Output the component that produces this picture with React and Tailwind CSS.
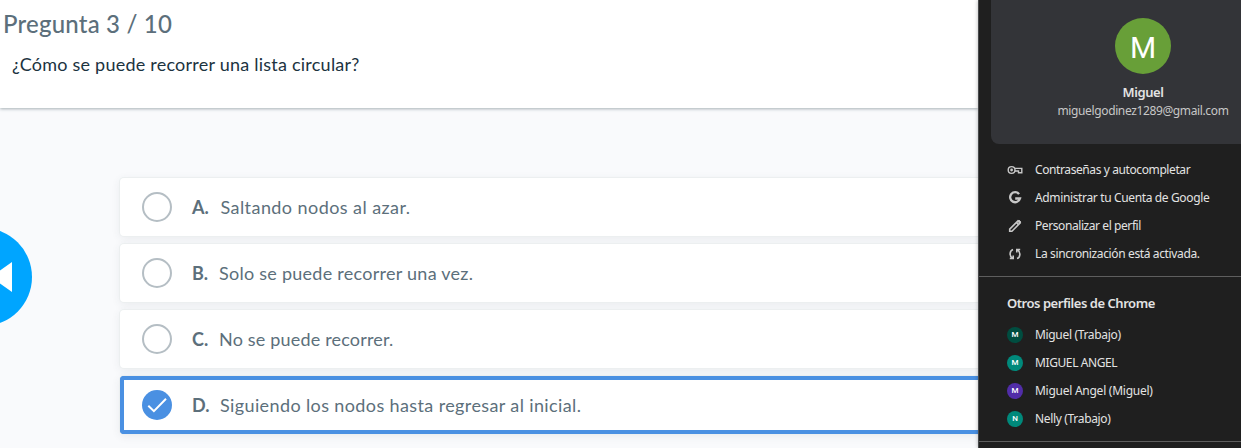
import React from "react";

const answers = [
  { id: "A.", text: "Saltando nodos al azar.", idCls: "w-[28.5px]", cls: "tracking-[0.43px]" },
  { id: "B.", text: "Solo se puede recorrer una vez.", idCls: "w-[27px]", cls: "tracking-[0.26px]" },
  { id: "C.", text: "No se puede recorrer.", idCls: "w-[27px]", cls: "tracking-[0.18px]" },
  { id: "D.", text: "Siguiendo los nodos hasta regresar al inicial.", idCls: "w-[28px]", cls: "tracking-[0.38px]", selected: true },
];

const KeyIcon = () => (
  <svg viewBox="0 0 16 16" className="size-4" fill="none" stroke="#c7c7c7" strokeWidth="1.4">
    <circle cx="4.6" cy="8" r="3.4" />
    <circle cx="4.6" cy="8" r="1.4" fill="#c7c7c7" stroke="none" />
    <path d="M7.8 6.4h7v4.4h-3.3V9H7.8" />
  </svg>
);
const GoogleIcon = () => (
  <svg viewBox="0 0 16 16" className="size-4" fill="none" stroke="#c7c7c7" strokeWidth="2.3">
    <path d="M12.1 4.1A5 5 0 1 0 13 8.5H8.2" />
  </svg>
);
const PencilIcon = () => (
  <svg viewBox="0 0 16 16" className="size-4" fill="none" stroke="#c7c7c7" strokeWidth="1.6">
    <path d="M2.7 13.3v-2.2L10.9 2.9l2.2 2.2-8.2 8.2z" />
    <path d="M9.4 4.4l2.2 2.2" />
    <path d="M11 2.9l1-.9 2 2-.9 1z" fill="#c7c7c7" strokeWidth=".8" />
  </svg>
);
const SyncIcon = () => (
  <svg viewBox="0 0 16 16" className="size-4" fill="none" stroke="#c7c7c7" strokeWidth="1.6">
    <path d="M6 3.4C2.4 4.8 2.2 9.8 5.3 12.2M6.2 9.4v3.1H2.8" />
    <path d="M10 12.6c3.6-1.4 3.8-6.4.7-8.8M9.8 6.6V3.5h3.4" />
  </svg>
);

const actions = [
  { Icon: KeyIcon, text: "Contraseñas y autocompletar", cls: "tracking-[-0.4px]" },
  { Icon: GoogleIcon, text: "Administrar tu Cuenta de Google", cls: "tracking-[-0.36px]" },
  { Icon: PencilIcon, text: "Personalizar el perfil", cls: "tracking-[-0.42px]" },
  { Icon: SyncIcon, text: "La sincronización está activada.", cls: "tracking-[-0.37px]" },
];
const profiles = [
  { letter: "M", bg: "bg-[#004d40]", text: "Miguel (Trabajo)", cls: "tracking-[-0.33px]" },
  { letter: "M", bg: "bg-[#00897b]", text: "MIGUEL ANGEL", cls: "tracking-[-0.4px]" },
  { letter: "M", bg: "bg-[#512da8]", text: "Miguel Angel (Miguel)", cls: "tracking-[-0.26px]" },
  { letter: "N", bg: "bg-[#00897b]", text: "Nelly (Trabajo)", cls: "tracking-[-0.33px]" },
];

function Answer({ a }) {
  return (
    <div
      className={
        "flex h-[58px] items-center rounded-l-[4px] bg-white shadow-[0_0_0_1px_#eceff0,0_2px_10px_rgba(50,70,80,0.09)] " +
        (a.selected ? "border-4 border-r-0 border-[#4a90e2] pl-[18px]" : "pl-[22px]")
      }
    >
      {a.selected ? (
        <svg viewBox="0 0 30 30" className="size-[30px] shrink-0">
          <circle cx="15" cy="15" r="15" fill="#4a90e2" />
          <path d="M6.3 15.7l5.6 5.5L24 8.7" fill="none" stroke="#fff" strokeWidth="2" />
        </svg>
      ) : (
        <span className="size-[30px] shrink-0 rounded-full border-2 border-[#b5bec4]" />
      )}
      <span className={"ml-5 shrink-0 text-[18px] font-bold " + a.idCls}>{a.id}</span>
      <span className={"whitespace-nowrap text-[18px] " + a.cls}>{a.text}</span>
    </div>
  );
}

export default function App() {
  return (
    <div className="flex h-[448px] w-[1241px] overflow-hidden bg-[#f9fafc]">
      <main className="flex w-[978px] shrink-0 flex-col overflow-hidden font-['Lato',sans-serif] text-[#5c6f7b]">
        <header className="h-[108px] shrink-0 bg-white shadow-[0_1px_3px_rgba(40,65,75,0.4)]">
          <h1 className="ml-[3px] mt-[6px] whitespace-nowrap text-[24px] font-medium leading-9 tracking-[0.2px]">
            Pregunta 3 / 10
          </h1>
          <p className="ml-3 mt-[10px] whitespace-nowrap text-[18px] leading-6 tracking-[0.23px] text-[#1c333f]">
            ¿Cómo se puede recorrer una lista circular?
          </p>
        </header>
        <div className="flex pt-[70px]">
          <div className="w-[120px] shrink-0 pt-[50px]">
            <svg viewBox="0 0 32 98" className="h-[98px] w-8">
              <circle cx="-17" cy="49" r="49" fill="#00a5ff" />
              <path d="M-9 49L12 34v30z" fill="#fff" />
            </svg>
          </div>
          <div className="flex grow flex-col gap-2">
            {answers.map((a) => (
              <Answer key={a.id} a={a} />
            ))}
          </div>
        </div>
      </main>
      <aside className="relative w-[263px] shrink-0 overflow-hidden border-l border-[#47494b] bg-[#1f1f1f] font-['Noto_Sans',sans-serif] text-[12px] text-[#e3e3e3] shadow-[0_0_4px_rgba(0,0,0,0.3)]">
        <section className="ml-3 flex h-36 w-[304px] flex-col items-center rounded-b-lg bg-[#333438] pt-[18px]">
          <div className="flex size-14 items-center justify-center rounded-full bg-[#689f38] pt-0.5 font-['Roboto',sans-serif] text-[30px] text-white">
            M
          </div>
          <div className="mt-[9px] text-[13px] font-semibold leading-[18px] tracking-[-0.45px]">Miguel</div>
          <div className="mt-px leading-[18px] tracking-[-0.37px] text-[#c7c7c7]">miguelgodinez1289@gmail.com</div>
        </section>
        <ul className="mt-3 flex flex-col">
          {actions.map(({ Icon, text, cls }) => (
            <li key={text} className="flex h-7 items-center pl-7">
              <Icon />
              <span className={"ml-3 whitespace-nowrap " + cls}>{text}</span>
            </li>
          ))}
        </ul>
        <div className="mt-2 h-px bg-[#5e5e5e]" />
        <h2 className="mt-[17px] whitespace-nowrap pl-7 text-[13px] font-semibold leading-[18px] tracking-[-0.46px]">Otros perfiles de Chrome</h2>
        <ul className="mt-[9px] flex flex-col">
          {profiles.map((p) => (
            <li key={p.text} className="flex h-7 items-center pl-7">
              <span className={"flex size-4 items-center justify-center rounded-full font-['Roboto',sans-serif] text-[8px] font-medium text-white " + p.bg}>
                {p.letter}
              </span>
              <span className={"ml-3 whitespace-nowrap " + p.cls}>{p.text}</span>
            </li>
          ))}
        </ul>
        <div className="mt-2 h-px bg-[#5e5e5e]" />
      </aside>
    </div>
  );
}
